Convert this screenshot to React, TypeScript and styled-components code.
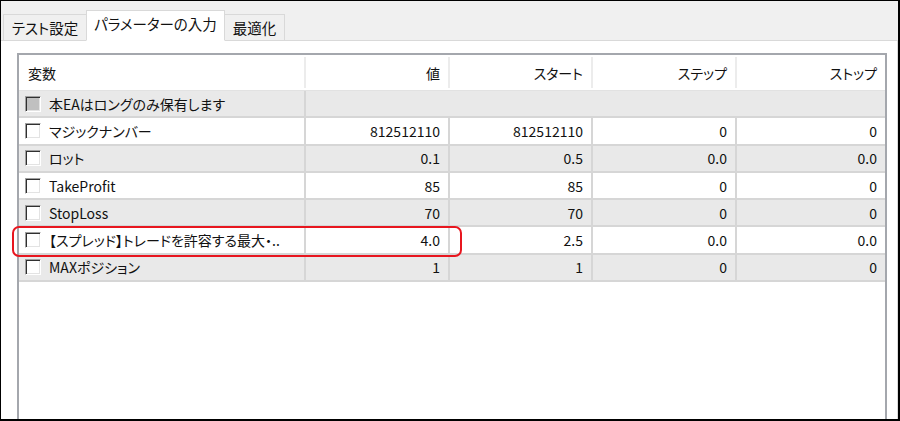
import React from "react";
import styled, { createGlobalStyle } from "styled-components";

const GlobalStyle = createGlobalStyle`
  html, body {
    margin: 0;
    padding: 0;
    background: #ffffff;
  }
  body {
    font-family: "Noto Sans CJK JP", "Noto Sans", sans-serif;
  }
`;

const Frame = styled.div`
  position: relative;
  width: 900px;
  height: 421px;
  box-sizing: border-box;
  border: 1px solid #000;
  border-right-width: 2px;
  border-bottom-width: 2px;
  background: #ffffff;
  display: flex;
  flex-direction: column;
  overflow: hidden;
  font-feature-settings: "palt";
  color: #111111;
`;

const TabBar = styled.div`
  height: 40px;
  box-sizing: border-box;
  background: #f0f0f0;
  border-bottom: 1px solid #d9d9d9;
  display: flex;
  align-items: flex-end;
  padding-left: 2px;
  flex-shrink: 0;
`;

const Tab = styled.div<{ $active?: boolean; $width: number }>`
  position: relative;
  width: ${(p) => p.$width}px;
  height: ${(p) => (p.$active ? 31 : 27)}px;
  box-sizing: border-box;
  margin-bottom: -1px;
  margin-left: ${(p) => (p.$active ? -1 : 0)}px;
  margin-right: ${(p) => (p.$active ? -1 : 0)}px;
  z-index: ${(p) => (p.$active ? 1 : 0)};
  border: 1px solid #d9d9d9;
  border-bottom-color: ${(p) => (p.$active ? "#ffffff" : "#d9d9d9")};
  background: ${(p) => (p.$active ? "#ffffff" : "#f0f0f0")};
  display: flex;
  align-items: center;
  justify-content: center;
  padding-bottom: ${(p) => (p.$active ? 4 : 1)}px;
  font-size: 14.5px;
  color: #111111;
`;

const Panel = styled.div`
  flex: 1;
  display: flex;
  padding: 12px 0 0 16px;
  min-height: 0;
  border-right: 1px solid #dcdcdc;
`;

const Table = styled.div`
  width: 870px;
  box-sizing: border-box;
  border: 2px solid #a4a7ad;
  border-bottom: none;
  background: #ffffff;
  font-size: 14px;
`;

const cols = "287px 144px 143px 144px 148px";

const HeaderRow = styled.div`
  display: grid;
  grid-template-columns: ${cols};
  height: 36px;
  box-sizing: border-box;
  border-bottom: 1px solid #e2e2e2;
  align-items: center;
`;

const HeaderCell = styled.div<{ $left?: boolean; $last?: boolean }>`
  height: 31px;
  box-sizing: border-box;
  display: flex;
  align-items: center;
  justify-content: ${(p) => (p.$left ? "flex-start" : "flex-end")};
  padding: ${(p) => (p.$left ? "0 0 0 9px" : "0 8px 0 0")};
  border-right: ${(p) => (p.$last ? "none" : "2px solid #ececec")};
`;

const Row = styled.div<{ $shade: boolean }>`
  display: grid;
  grid-template-columns: ${cols};
  height: 27.3px;
  box-sizing: border-box;
  border-bottom: 2px solid #d6d6d6;
  background: ${(p) => (p.$shade ? "#e9e9e9" : "#ffffff")};
`;

const Cell = styled.div<{ $span?: number; $last?: boolean }>`
  grid-column: span ${(p) => p.$span ?? 1};
  display: flex;
  align-items: center;
  justify-content: flex-end;
  padding-right: 8px;
  border-right: ${(p) => (p.$last ? "none" : "2px solid #d6d6d6")};
  white-space: nowrap;
`;

const NameCell = styled.div`
  display: flex;
  align-items: center;
  gap: 8px;
  padding-left: 6px;
  border-right: 2px solid #d6d6d6;
  white-space: nowrap;
  overflow: hidden;
`;

const Check = styled.span<{ $disabled?: boolean }>`
  width: 16px;
  height: 16px;
  box-sizing: border-box;
  flex-shrink: 0;
  border: 1px solid;
  border-color: #a0a0a0 #ffffff #ffffff #a0a0a0;
  box-shadow: inset 1px 1px 0 #303030, inset -1px -1px 0 #e3e3e3;
  background: ${(p) => (p.$disabled ? "#c0c0c0" : "#ffffff")};
`;

const Highlight = styled.div`
  position: absolute;
  left: 11px;
  top: 225px;
  width: 450px;
  height: 31px;
  box-sizing: border-box;
  border: 2.5px solid #e8161f;
  border-radius: 7px;
  pointer-events: none;
`;

type Param = {
  name: string;
  value: string;
  start: string;
  step: string;
  stop: string;
};

const params: Param[] = [
  { name: "マジックナンバー", value: "812512110", start: "812512110", step: "0", stop: "0" },
  { name: "ロット", value: "0.1", start: "0.5", step: "0.0", stop: "0.0" },
  { name: "TakeProfit", value: "85", start: "85", step: "0", stop: "0" },
  { name: "StopLoss", value: "70", start: "70", step: "0", stop: "0" },
  { name: "【スプレッド】トレードを許容する最大・..", value: "4.0", start: "2.5", step: "0.0", stop: "0.0" },
  { name: "MAXポジション", value: "1", start: "1", step: "0", stop: "0" },
];

export default function App() {
  return (
    <>
      <GlobalStyle />
      <Frame>
        <TabBar>
          <Tab $width={84}>テスト設定</Tab>
          <Tab $active $width={139}>パラメーターの入力</Tab>
          <Tab $width={61}>最適化</Tab>
        </TabBar>
        <Panel>
          <Table>
            <HeaderRow>
              <HeaderCell $left>変数</HeaderCell>
              <HeaderCell>値</HeaderCell>
              <HeaderCell>スタート</HeaderCell>
              <HeaderCell>ステップ</HeaderCell>
              <HeaderCell $last>ストップ</HeaderCell>
            </HeaderRow>
            <Row $shade>
              <NameCell>
                <Check $disabled />
                本EAはロングのみ保有します
              </NameCell>
              <Cell $span={4} $last />
            </Row>
            {params.map((p, i) => (
              <Row key={p.name} $shade={i % 2 === 1}>
                <NameCell>
                  <Check />
                  {p.name}
                </NameCell>
                <Cell>{p.value}</Cell>
                <Cell>{p.start}</Cell>
                <Cell>{p.step}</Cell>
                <Cell $last>{p.stop}</Cell>
              </Row>
            ))}
          </Table>
        </Panel>
        <Highlight />
      </Frame>
    </>
  );
}
